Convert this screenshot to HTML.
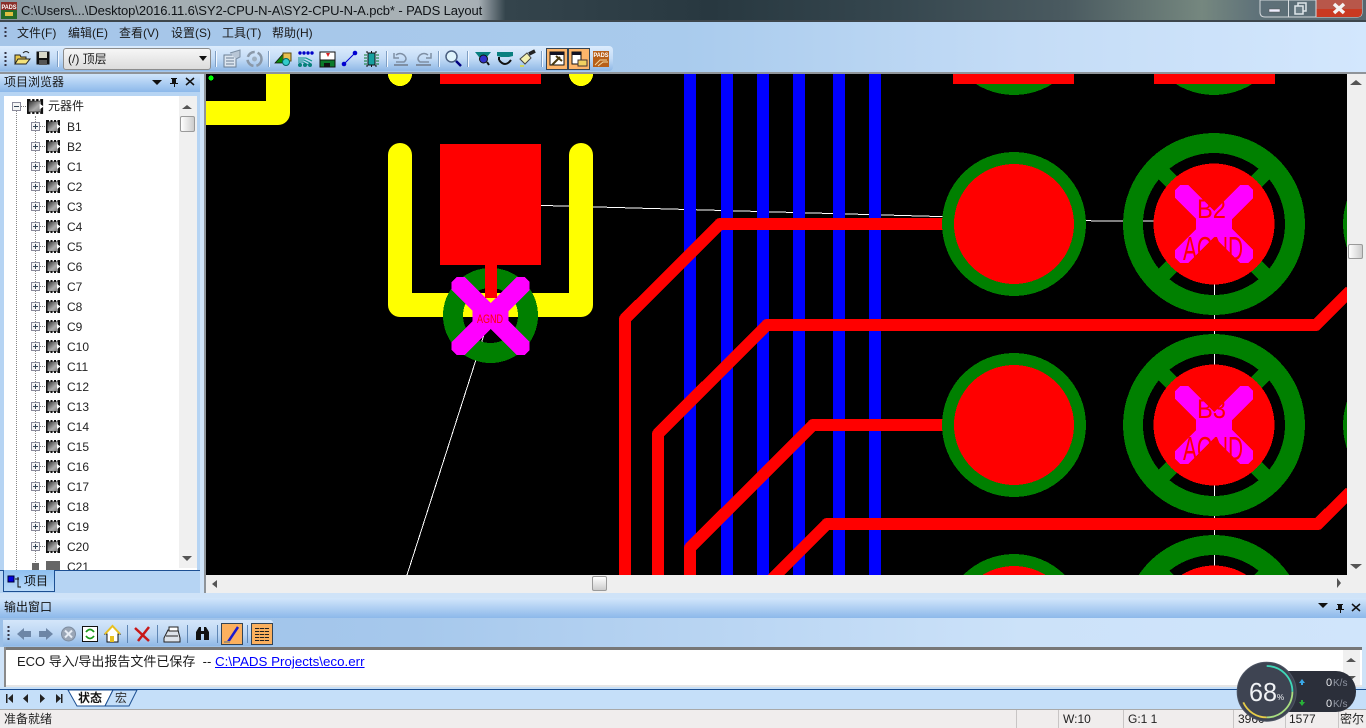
<!DOCTYPE html>
<html><head><meta charset="utf-8"><title>PADS Layout</title>
<style>
html,body{margin:0;padding:0;background:#cfe3f8}
#p{position:relative;width:1366px;height:728px;overflow:hidden;font-family:"Liberation Sans","Noto Sans CJK SC",sans-serif;font-size:12px;color:#1a1a1a}
#p div{position:absolute}
.m{top:25px;white-space:nowrap;line-height:17px}
.t{left:67px;line-height:16px;color:#222}
.s{top:709px;line-height:21px;font-size:12px;color:#222;white-space:nowrap}
.v{top:710px;width:1px;height:18px;background:#c8c5c5}
</style></head><body><div id="p">

<div style="left:0;top:0;width:1366px;height:21px;background:linear-gradient(90deg,#87959d 0,#a3adb2 10%,#a9b2b6 33%,#a7afb5 35%,#34444c 37%,#283840 52%,#35464e 65%,#4a5a60 78%,#75877f 88%,#5f7279 92%,#56666e 100%)"></div>
<div style="left:21px;top:3px;font-size:13px;letter-spacing:-.1px;line-height:16px;color:#101418;white-space:nowrap">C:\Users\...\Desktop\2016.11.6\SY2-CPU-N-A\SY2-CPU-N-A.pcb* - PADS Layout</div>
<div style="left:0;top:20px;width:1366px;height:2px;background:#3d464c"></div>
<div style="left:0;top:22px;width:1366px;height:51px;background:linear-gradient(90deg,#a5c5e8 0,#a9cbed 50%,#c4dcf6 75%,#d3e7fd 100%)"></div>
<div class="m" style="left:17px">文件(F)</div><div class="m" style="left:68px">编辑(E)</div><div class="m" style="left:119px">查看(V)</div><div class="m" style="left:171px">设置(S)</div><div class="m" style="left:222px">工具(T)</div><div class="m" style="left:272px">帮助(H)</div>

<div style="left:0;top:46px;width:613px;height:25px;border-radius:0 4px 4px 0;background:linear-gradient(#dcecfd,#c4dcf6 50%,#8fb8e6)"></div>
<div style="left:63px;top:48px;width:146px;height:20px;border:1px solid #8c8c8c;border-radius:3px;background:linear-gradient(#f6f6f6,#dcdcdc);line-height:20px;text-indent:4px;white-space:pre">(/) 顶层</div>
<div style="left:0;top:72px;width:1366px;height:2px;background:#8f9499"></div>

<div style="left:0;top:74px;width:200px;height:523px;background:#b6d4f3"></div>
<div style="left:0;top:74px;width:200px;height:18px;background:linear-gradient(#d0e5fb,#8cb8ea)"></div>
<div style="left:4px;top:74px;line-height:17px;white-space:nowrap">项目浏览器</div>
<div style="left:200px;top:74px;width:4px;height:519px;background:#cfe3f8"></div>
<div style="left:204px;top:74px;width:2px;height:519px;background:#8f9499"></div>

<div style="left:4px;top:96px;width:193px;height:474px;background:#fff;overflow:hidden">
<div style="left:12px;top:12px;width:0;height:462px;border-left:1px dotted #888"></div>
<div style="left:31px;top:20px;width:0;height:454px;border-left:1px dotted #888"></div>
</div>
<div style="left:48px;top:98px;line-height:17px;color:#222">元器件</div>
<div class="t" style="top:119px">B1</div><div class="t" style="top:139px">B2</div>
<div class="t" style="top:159px">C1</div><div class="t" style="top:179px">C2</div><div class="t" style="top:199px">C3</div>
<div class="t" style="top:219px">C4</div><div class="t" style="top:239px">C5</div><div class="t" style="top:259px">C6</div>
<div class="t" style="top:279px">C7</div><div class="t" style="top:299px">C8</div><div class="t" style="top:319px">C9</div>
<div class="t" style="top:339px">C10</div><div class="t" style="top:359px">C11</div><div class="t" style="top:379px">C12</div>
<div class="t" style="top:399px">C13</div><div class="t" style="top:419px">C14</div><div class="t" style="top:439px">C15</div>
<div class="t" style="top:459px">C16</div><div class="t" style="top:479px">C17</div><div class="t" style="top:499px">C18</div>
<div class="t" style="top:519px">C19</div><div class="t" style="top:539px">C20</div>
<div style="left:67px;top:559px;width:40px;height:11px;overflow:hidden"><div style="left:0;top:0;line-height:16px;color:#222">C21</div></div>
<div style="left:179px;top:96px;width:18px;height:472px;background:#f0f0f0"></div>
<div style="left:180px;top:116px;width:13px;height:14px;border:1px solid #9a9a9a;border-radius:2px;background:linear-gradient(90deg,#fff,#ccc)"></div>
<div style="left:0;top:570px;width:200px;height:1px;background:#1c4f92"></div>
<div style="left:3px;top:570px;width:50px;height:21px;border:1px solid #1c4f92;border-top:0;background:linear-gradient(#8fc0f0,#b9daf9)"></div>
<div style="left:24px;top:573px;line-height:17px;color:#111">项目</div>

<svg style="position:absolute;left:206px;top:74px" width="1141" height="501" viewBox="206 74 1141 501" shape-rendering="crispEdges">
<defs>
<polygon id="x" fill="#f0f" points="-34,-39 -26,-39 0,-13 26,-39 34,-39 39,-34 39,-26 18,-5 18,5 39,26 39,34 34,39 26,39 0,13 -26,39 -34,39 -39,34 -39,26 -18,5 -18,-5 -39,-26 -39,-34"/>
<g id="pad"><circle r="81" fill="none" stroke="#008000" stroke-width="20"/><path d="M-53,-53L53,53M-53,53L53,-53" stroke="#008000" stroke-width="15"/><circle r="60.5" fill="#f00"/><use href="#x"/></g>
</defs>
<rect x="206" y="74" width="1141" height="501" fill="#000"/>
<g stroke="#fff" stroke-width="1" fill="none"><path d="M490,204L1100,221H1214M1214.500,224V626M490,316L407,575"/></g>
<path d="M690,74V575M727,74V575M763,74V575M799,74V575M839,74V575M875,74V575" stroke="#00f" stroke-width="12"/>
<g fill="none" stroke="#ff0" stroke-width="24" stroke-linecap="round" stroke-linejoin="round">
<path d="M278,60V113H190" shape-rendering="auto"/>
<path d="M400,155V305H581V155" shape-rendering="auto"/>
</g>
<circle cx="400" cy="74" r="12" fill="#ff0"/><circle cx="581" cy="74" r="12" fill="#ff0"/>
<circle cx="211" cy="78" r="2.500" fill="#0f0"/>
<rect x="440" y="74" width="101" height="10" fill="#f00"/>
<rect x="440" y="144" width="101" height="121" fill="#f00"/>
<circle cx="490.500" cy="315.500" r="37.500" fill="none" stroke="#008000" stroke-width="20"/>
<use href="#x" x="490.500" y="316"/>
<rect x="485" y="265" width="12" height="33" fill="#f00"/>
<text x="477" y="323" font-family="Liberation Sans" font-size="12" fill="#f00" textLength="26" lengthAdjust="spacingAndGlyphs">AGND</text>

<g fill="none" stroke="#f00" stroke-width="12" stroke-linejoin="round">
<path d="M625,580V319L720,224H960"/>
<path d="M658,580V434L767,325H1316L1350,291"/>
<path d="M690,580V548L813,425H960"/>
<path d="M770,581L827,524H1318L1350,492"/>
</g>

<g fill="#008000"><circle cx="1014" cy="23" r="72"/><circle cx="1214" cy="23" r="72"/><circle cx="1014" cy="224" r="72"/><circle cx="1014" cy="425" r="72"/><circle cx="1014" cy="626" r="72"/><circle cx="1415" cy="224" r="72"/><circle cx="1415" cy="425" r="72"/></g>
<g fill="#f00"><circle cx="1014" cy="224" r="60"/><circle cx="1014" cy="425" r="60"/><circle cx="1014" cy="626" r="60"/>
<rect x="953" y="74" width="121" height="10"/><rect x="1154" y="74" width="121" height="10"/></g>
<use href="#pad" x="1214" y="224"/><use href="#pad" x="1214" y="425"/><use href="#pad" x="1214" y="626"/>
<g font-family="Liberation Sans" fill="#f00">
<text x="1197" y="218" font-size="27" textLength="29" lengthAdjust="spacingAndGlyphs">B2</text>
<text x="1183" y="260" font-size="33" textLength="60" lengthAdjust="spacingAndGlyphs">AGND</text>
<text x="1197" y="418" font-size="27" textLength="29" lengthAdjust="spacingAndGlyphs">B3</text>
<text x="1183" y="460" font-size="33" textLength="60" lengthAdjust="spacingAndGlyphs">AGND</text>
</g>
</svg>

<div style="left:1347px;top:74px;width:19px;height:519px;background:#efefef"></div>
<div style="left:1348px;top:244px;width:13px;height:13px;border:1px solid #9a9a9a;border-radius:2px;background:linear-gradient(90deg,#fff,#ccc)"></div>
<div style="left:206px;top:575px;width:1141px;height:18px;background:#efefef"></div>
<div style="left:592px;top:576px;width:13px;height:13px;border:1px solid #9a9a9a;border-radius:2px;background:linear-gradient(#fff,#ccc)"></div>

<div style="left:0;top:593px;width:1366px;height:5px;background:#cfe3f8"></div>
<div style="left:0;top:598px;width:1366px;height:20px;background:linear-gradient(#d2e6fb,#8cb8ea)"></div>
<div style="left:4px;top:599px;line-height:17px;color:#111">输出窗口</div>
<div style="left:0;top:618px;width:1366px;height:29px;background:linear-gradient(90deg,#9cc0e8 0,#a6c8ec 30%,#cce2f9 75%,#d0e5fb 100%)"></div>
<div style="left:3px;top:620px;width:270px;height:26px;border-radius:0 3px 3px 0;background:linear-gradient(#d4e6fa,#bcd6f3 55%,#8fb8e6)"></div>
<div style="left:4px;top:647px;width:1358px;height:3px;background:#777"></div>
<div style="left:4px;top:650px;width:1358px;height:37px;background:#fff;border-bottom:0"></div>
<div style="left:4px;top:647px;width:2px;height:40px;background:#8a8a8a"></div>
<div style="left:6px;top:685px;width:1356px;height:2px;background:#e6e6e6"></div>
<div style="left:1343px;top:650px;width:17px;height:35px;background:#f0f0f0"></div>
<div style="left:17px;top:653px;font-size:13px;line-height:17px;white-space:pre;color:#1a1a1a">ECO 导入/导出报告文件已保存  --</div>
<div style="left:215px;top:653px;font-size:13.35px;line-height:17px;white-space:pre;color:#00f;text-decoration:underline">C:\PADS Projects\eco.err</div>
<div style="left:0;top:687px;width:1366px;height:22px;background:#c5dff9"></div>
<div style="left:0;top:689px;width:1366px;height:1px;background:#1c4f92"></div>
<div style="left:0;top:709px;width:1366px;height:19px;background:#f0eded;border-top:1px solid #a9a9a9"></div>

<svg style="position:absolute;left:0;top:0" width="1366" height="728" viewBox="0 0 1366 728">
<defs>
<linearGradient id="cg" x1="0" y1="0" x2="1" y2="1"><stop offset="0" stop-color="#333"/><stop offset=".6" stop-color="#aaa"/><stop offset="1" stop-color="#888"/></linearGradient>
<g id="chip"><rect x="0" y="0" width="14" height="13" fill="#111"/><path d="M3,0H4.500V1.500H3ZM6.500,0H8V1.500H6.500ZM10,0H11.500V1.500H10ZM3,11.500H4.500V13H3ZM6.500,11.500H8V13H6.500ZM10,11.500H11.500V13H10Z" fill="#fff"/><rect x="1.500" y="2" width="10.500" height="9" fill="url(#cg)"/><path d="M11,4L14.500,6.500L11,9Z" fill="#fff"/></g>
<g id="plus"><rect x=".5" y=".5" width="8" height="8" fill="#f4f4f4" stroke="#8a8a9a"/><path d="M2,4.500H7M4.500,2V7" stroke="#345"/><path d="M9,4.500H15" stroke="#777" stroke-dasharray="1 1"/></g>
</defs>

<!-- title logo -->
<rect x="1" y="2" width="16" height="17" fill="#8a2f2a"/><rect x="1" y="10" width="16" height="9" fill="#246a2a"/>
<text x="1.500" y="9" font-size="6.500" font-weight="bold" font-family="Liberation Sans" fill="#fff" textLength="15" lengthAdjust="spacingAndGlyphs">PADS</text>
<rect x="5" y="12" width="8" height="4" fill="#e0c040"/>

<!-- window buttons -->
<path d="M1260,0H1362V12Q1362,17 1357,17H1265Q1260,17 1260,12Z" fill="#5d6f78" stroke="#d8dde0" opacity=".95"/>
<path d="M1316,0H1362V12Q1362,17 1357,17H1316Z" fill="#b8574a"/><path d="M1316,9H1362V12Q1362,17 1357,17H1316Z" fill="#c93a22"/>
<path d="M1288.500,0V17M1316,0V17" stroke="#d8dde0"/>
<rect x="1269" y="9" width="11" height="3" fill="#eef" stroke="#555" stroke-width=".5"/>
<rect x="1298" y="3" width="8" height="8" fill="none" stroke="#dfe6ea" stroke-width="1.500"/><rect x="1295" y="6" width="8" height="8" fill="#6b7d86" stroke="#dfe6ea" stroke-width="1.500"/>
<path d="M1334,4L1344,13M1344,4L1334,13" stroke="#f4f4f4" stroke-width="3.500"/>

<!-- grippers -->
<path d="M5.500,27V39" stroke="#334" stroke-width="2" stroke-dasharray="2 2"/>
<path d="M5.500,52V66" stroke="#334" stroke-width="2" stroke-dasharray="2 2"/>

<!-- toolbar separators -->
<g stroke="#7f9fc4"><path d="M57.500,51V67M215.500,51V67M268.500,51V67M386.500,51V67M438.500,51V67M467.500,51V67M541.500,51V67"/></g>
<g stroke="#f4f9ff"><path d="M58.500,51V67M216.500,51V67M269.500,51V67M387.500,51V67M439.500,51V67M468.500,51V67M542.500,51V67"/></g>
<path d="M199,56H207L203,61Z" fill="#111"/>

<!-- open -->
<path d="M15,64V55H20L21,57H26V64Z" fill="#e8c84a" stroke="#222"/><path d="M15,64L18,59H30L26,64Z" fill="#f5e27a" stroke="#222"/><path d="M23,53Q26,50 29,53" fill="none" stroke="#222"/>
<!-- save -->
<rect x="36.500" y="51.500" width="13" height="13" fill="#111"/><rect x="39" y="52" width="8" height="6" fill="#d8d8c8"/><rect x="39" y="60" width="8" height="5" fill="#555"/>
<!-- report gray -->
<path d="M224,55H236V67H224Z" fill="#dce6f0" stroke="#6b7f94"/><path d="M226,58H234M226,61H234M226,64H234" stroke="#6b7f94"/><path d="M230,53L240,50V57L236,59" fill="#b8c6d6" stroke="#7b8ea2"/>
<!-- refresh gray -->
<circle cx="254.500" cy="59" r="7" fill="none" stroke="#8a98a8" stroke-width="2.500" stroke-dasharray="9 3"/><circle cx="254.500" cy="59" r="2.500" fill="#9fb0c0"/>
<!-- shapes -->
<path d="M275,63L283,54L289,63Z" fill="#0a8a0a" stroke="#111" stroke-width=".7"/><rect x="283" y="53" width="8" height="8" fill="#e8c050" stroke="#5a4a10"/><circle cx="286" cy="62" r="3.500" fill="#3cc" stroke="#066"/>
<!-- traces -->
<g fill="#0000c8"><circle cx="300" cy="53" r="1.700"/><circle cx="304" cy="53" r="1.700"/><circle cx="308" cy="53" r="1.700"/><circle cx="312" cy="53" r="1.700"/></g>
<path d="M298,58H306L312,61M298,60H304L310,63M298,62H303L308,65" stroke="#07908a" fill="none"/>
<g fill="#07807a"><circle cx="300" cy="65" r="2"/><circle cx="305" cy="65" r="2"/><circle cx="310" cy="65" r="2"/></g>
<!-- board -->
<rect x="320" y="52" width="15" height="15" fill="#fff" stroke="#111"/><rect x="320" y="60" width="15" height="7" fill="#0a7a2a" stroke="#111"/><path d="M326,53L328,57L330,53Z" fill="#d22"/><path d="M324,63H330V67H324Z" fill="#111"/>
<!-- connection -->
<path d="M344,64L355,53" stroke="#0000d0"/><circle cx="344" cy="64" r="2.300" fill="#0000d0"/><circle cx="355" cy="53" r="2.300" fill="#0000d0"/>
<!-- part -->
<rect x="368" y="53" width="7" height="12" fill="#16a0a0" stroke="#111"/><path d="M364,55H379M364,58H379M364,61H379M364,64H379" stroke="#0a7a2a" stroke-dasharray="3 9"/><path d="M367,51V67M371.500,51V67M376,51V67" stroke="#111" stroke-dasharray="2 12"/>
<!-- undo redo -->
<g fill="none" stroke="#7f8fa4" stroke-width="1.500"><path d="M396,55Q400,52 404,55Q408,59 404,62H396M394,53V58H399"/><path d="M428,55Q424,52 420,55Q416,59 420,62H429M431,53V58H426"/></g>
<path d="M394,65H408M416,65H431" stroke="#7f8fa4" stroke-width="2"/>
<!-- magnifier -->
<circle cx="451.500" cy="56.500" r="5.500" fill="#dff3fb" stroke="#4a5f80" stroke-width="1.500"/><path d="M456,61L461,66" stroke="#000080" stroke-width="2.500"/>
<!-- view -->
<path d="M475,52H491L487,57H479Z" fill="#0a8080"/><circle cx="483.500" cy="59" r="4" fill="#33c" stroke="#111"/><path d="M487,62L489,65" stroke="#111" stroke-width="2"/>
<path d="M497,52H513V56L509,57H501L497,56Z" fill="#0a8080"/><path d="M499,60Q505,68 511,60M499,60V57" fill="none" stroke="#111" stroke-width="2"/>
<!-- brush -->
<path d="M520,59L527,53L531,58L525,64Z" fill="#f3f0b0" stroke="#444"/><path d="M529,54L535,51" stroke="#222" stroke-width="3.500"/><path d="M520,66H524" stroke="#dd3" stroke-width="1.500"/>
<!-- pressed -->
<rect x="546.500" y="48.500" width="21" height="21" fill="#fdb56a" stroke="#345"/><rect x="550" y="52" width="14" height="13" fill="#fff" stroke="#111"/><rect x="550" y="52" width="14" height="3" fill="#112"/><path d="M552,65L560,57M556,56L562,61" stroke="#4a3a10" stroke-width="2"/>
<rect x="568.500" y="48.500" width="21" height="21" fill="#fdb56a" stroke="#345"/><rect x="572" y="52" width="9" height="12" fill="#fff" stroke="#111"/><rect x="572" y="52" width="9" height="3" fill="#112"/><rect x="578" y="60" width="9" height="6" fill="#f0d060" stroke="#433"/>
<!-- pads -->
<rect x="593" y="51" width="16" height="16" fill="#b85f18"/><text x="593.500" y="57" font-size="6" font-weight="bold" font-family="Liberation Sans" fill="#fff" textLength="15" lengthAdjust="spacingAndGlyphs">PADS</text><path d="M595,65L600,60H607M598,66L603,62H608" stroke="#f2d9a0" fill="none"/>

<!-- panel header icons -->
<path d="M152,80H162L157,85Z" fill="#111"/>
<path d="M171,78H177V79H176V83H178V84H175V87H174V84H170V83H172V79H171Z" fill="#111"/>
<path d="M186,78L194,85M194,78L186,85" stroke="#111" stroke-width="1.500"/>
<path d="M1318,603H1328L1323,608Z" fill="#111"/>
<path d="M1337,604H1343V605H1342V609H1344V610H1341V613H1340V610H1336V609H1338V605H1337Z" fill="#111"/>
<path d="M1352,604L1360,611M1360,604L1352,611" stroke="#111" stroke-width="1.500"/>

<!-- scroll arrows -->
<g fill="#555"><path d="M182,109L187,105L192,109Z"/><path d="M182,556L187,561L192,556Z"/><path d="M1350,85L1356,80L1362,85Z"/><path d="M1350,564L1356,569L1362,564Z"/><path d="M217,580L212,584L217,588Z"/><path d="M1337,578L1341,583L1337,588Z"/><path d="M1346,662L1351,658L1356,662Z"/><path d="M1346,676L1351,680L1356,676Z"/></g>

<!-- tree -->
<g transform="translate(12,102)"><rect x=".5" y=".5" width="8" height="8" fill="#f4f4f4" stroke="#8a8a9a"/><path d="M2,4.500H7" stroke="#345"/><path d="M9,4.500H15" stroke="#777" stroke-dasharray="1 1"/></g>
<g transform="translate(27,99) scale(1.150)"><use href="#chip"/></g>
<g id="r">
<use href="#plus" x="31" y="122"/><use href="#chip" x="46" y="120"/>
<use href="#plus" x="31" y="142"/><use href="#chip" x="46" y="140"/>
<use href="#plus" x="31" y="162"/><use href="#chip" x="46" y="160"/>
<use href="#plus" x="31" y="182"/><use href="#chip" x="46" y="180"/>
<use href="#plus" x="31" y="202"/><use href="#chip" x="46" y="200"/>
<use href="#plus" x="31" y="222"/><use href="#chip" x="46" y="220"/>
<use href="#plus" x="31" y="242"/><use href="#chip" x="46" y="240"/>
<use href="#plus" x="31" y="262"/><use href="#chip" x="46" y="260"/>
<use href="#plus" x="31" y="282"/><use href="#chip" x="46" y="280"/>
<use href="#plus" x="31" y="302"/><use href="#chip" x="46" y="300"/>
<use href="#plus" x="31" y="322"/><use href="#chip" x="46" y="320"/>
<use href="#plus" x="31" y="342"/><use href="#chip" x="46" y="340"/>
<use href="#plus" x="31" y="362"/><use href="#chip" x="46" y="360"/>
<use href="#plus" x="31" y="382"/><use href="#chip" x="46" y="380"/>
<use href="#plus" x="31" y="402"/><use href="#chip" x="46" y="400"/>
<use href="#plus" x="31" y="422"/><use href="#chip" x="46" y="420"/>
<use href="#plus" x="31" y="442"/><use href="#chip" x="46" y="440"/>
<use href="#plus" x="31" y="462"/><use href="#chip" x="46" y="460"/>
<use href="#plus" x="31" y="482"/><use href="#chip" x="46" y="480"/>
<use href="#plus" x="31" y="502"/><use href="#chip" x="46" y="500"/>
<use href="#plus" x="31" y="522"/><use href="#chip" x="46" y="520"/>
<use href="#plus" x="31" y="542"/><use href="#chip" x="46" y="540"/>
</g>
<path d="M32,563H39V570H32ZM46,561H60V570H46Z" fill="#666"/>

<!-- project tab icon -->
<rect x="8" y="576" width="6" height="6" fill="#0000e0" stroke="#003"/><path d="M15,579H19M18,577V587H21" fill="none" stroke="#111"/>

<!-- output toolbar -->
<path d="M8.500,626V642" stroke="#334" stroke-width="2" stroke-dasharray="2 2"/>
<g fill="#6d86a6"><path d="M17,634L24,628V631H31V637H24V640Z"/><path d="M53,634L46,628V631H39V637H46V640Z"/></g>
<circle cx="68.500" cy="634" r="7" fill="#9aa6b6" stroke="#7d8ca0"/><path d="M65,630.500L72,637.500M72,630.500L65,637.500" stroke="#e6ecf4" stroke-width="2"/>
<rect x="82.500" y="626.500" width="15" height="15" fill="#fff" stroke="#111"/><path d="M86,632Q90,627 94,632M94,636Q90,641 86,636" fill="none" stroke="#1a9a1a" stroke-width="1.800"/>
<path d="M105,634L112.500,626L120,634H118V642H107V634Z" fill="#fff" stroke="#111"/><path d="M105,634L112.500,626L120,634" fill="none" stroke="#e8c020" stroke-width="2"/><rect x="110" y="636" width="4" height="6" fill="#e8c020"/>
<path d="M135,628L149,641M149,627L138,641" stroke="#c81818" stroke-width="2.500"/>
<path d="M164,638L168,630H178L180,638V642H164Z" fill="#dde3ea" stroke="#222"/><path d="M169,627H178V631H169ZM166,636H178" stroke="#222" fill="#fff"/>
<path d="M196,640V632L199,627H201V640ZM204,640V627H206L209,632V640Z" fill="#111"/><rect x="200" y="631" width="5" height="3" fill="#111"/>
<g stroke="#5f86b4"><path d="M127.500,625V643M157.500,625V643M187.500,625V643M217.500,625V643M247.500,625V643"/></g>
<rect x="221.500" y="623.500" width="21" height="21" fill="#fbb05e" stroke="#345"/><path d="M228,642L238,627" stroke="#1a1ad0" stroke-width="2.500"/><path d="M224,642H230" stroke="#a89070" stroke-width="2"/>
<rect x="251.500" y="623.500" width="21" height="21" fill="#fbb05e" stroke="#345"/><path d="M255,628.500H269M255,631.500H269M255,634.500H269M255,637.500H269M255,640.500H269" stroke="#222"/><path d="M259.500,627V642M264.500,627V642" stroke="#fbb05e" stroke-width=".7"/>

<!-- tabs -->
<g fill="#222"><path d="M6,694H7.500V703H6ZM13,694V703L8,698.500Z"/><path d="M28,694V703L23,698.500Z"/><path d="M40,694V703L45,698.500Z"/><path d="M56,694V703L61,698.500ZM61,694H62.500V703H61Z"/></g>
<path d="M68,690L77,706H105L113,690Z" fill="#fff" stroke="#1c4f92"/>
<path d="M113,690L105,706H129L137,690Z" fill="#c5dff9" stroke="#1c4f92"/>
<text x="78" y="702" font-size="12" font-weight="bold" font-family="Liberation Sans,Noto Sans CJK SC" fill="#111">状态</text>
<text x="115" y="702" font-size="12" font-family="Liberation Sans,Noto Sans CJK SC" fill="#333">宏</text>
</svg>

<div style="left:4px;top:710px;line-height:18px;color:#222">准备就绪</div>
<div class="v" style="left:1016px"></div><div class="v" style="left:1058px"></div><div class="v" style="left:1123px"></div><div class="v" style="left:1233px"></div><div class="v" style="left:1285px"></div><div class="v" style="left:1338px"></div>
<div class="s" style="left:1063px;top:710px;line-height:18px">W:10</div>
<div class="s" style="left:1128px;top:710px;line-height:18px">G:1 1</div>
<div class="s" style="left:1238px;top:710px;line-height:18px">3960</div>
<div class="s" style="left:1289px;top:710px;line-height:18px">1577</div>
<div class="s" style="left:1340px;top:710px;line-height:18px">密尔</div>

<!-- monitor widget -->
<svg style="position:absolute;left:1230px;top:660px" width="136" height="68" viewBox="1230 660 136 68">
<rect x="1262" y="671" width="94" height="41" rx="20" fill="#2b2f3a"/>
<circle cx="1266.700" cy="691.700" r="29.500" fill="#3e4452" stroke="#4d5463"/>
<g fill="none" stroke-width="1.800"><path d="M1266.700,666A25.700,25.700 0 0 1 1292.400,691.700" stroke="#3ed8b8"/><path d="M1292.400,691.700A25.700,25.700 0 0 1 1266.700,717.400" stroke="#a8de80"/><path d="M1266.700,717.400A25.700,25.700 0 0 1 1243.300,702.400" stroke="#e6cc48"/></g>
<text x="1249" y="701" font-size="26" font-family="Liberation Sans" fill="#f0f2f5" textLength="28" lengthAdjust="spacingAndGlyphs">68</text>
<text x="1277" y="700" font-size="8" font-family="Liberation Sans" fill="#f0f2f5">%</text>
<path d="M1302,679L1299,683H1301V685H1303V683H1305Z" fill="#3aa8e8"/>
<path d="M1302,706L1299,702H1301V700H1303V702H1305Z" fill="#28b038"/>
<text x="1326" y="686" font-size="11" font-family="Liberation Sans" fill="#e8eaee">0</text><text x="1333" y="686" font-size="10" font-family="Liberation Sans" fill="#8d93a0">K/s</text>
<text x="1326" y="707" font-size="11" font-family="Liberation Sans" fill="#e8eaee">0</text><text x="1333" y="707" font-size="10" font-family="Liberation Sans" fill="#8d93a0">K/s</text>
</svg>
</div></body></html>
